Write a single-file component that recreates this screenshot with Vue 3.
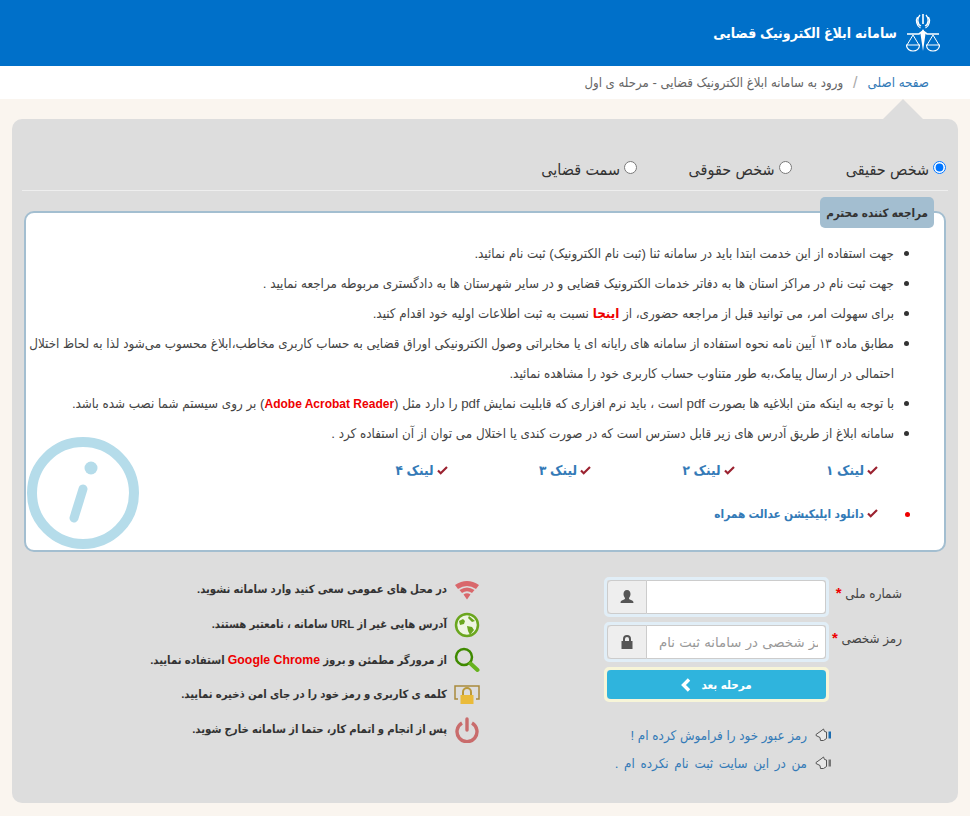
<script setup>
const bullets = [
  { text: 'جهت استفاده از این خدمت ابتدا باید در سامانه ثنا (ثبت نام الکترونیک) ثبت نام نمائید.' },
  { text: 'جهت ثبت نام در مراکز استان ها به دفاتر خدمات الکترونیک قضایی و در سایر شهرستان ها به دادگستری مربوطه مراجعه نمایید .' }
]
const links = ['لینک ۱', 'لینک ۲', 'لینک ۳', 'لینک ۴']
</script>

<template>
  <div class="page" dir="rtl">
    <header class="top">
      <svg class="emblem" viewBox="0 0 34 40" width="34" height="40" fill="none" stroke="#fff" stroke-width="1">
        <path d="M17 1v10" stroke-width="1.600" />
        <path d="M14 2c-3 3-3 9 1 11M20 2c3 3 3 9-1 11M11.500 4c-2 3-1 9 3 11M22.500 4c2 3 1 9-3 11" stroke-width="1.300" />
        <path d="M1 21h12l4-3 4 3h12" stroke-width="1.600" />
        <path d="M17 16l-2.500 5 2.500 17 2.500-17z" fill="#fff" stroke="none" />
        <path d="M7 22L1 32M7 22l6 10M27 22l-6 10M27 22l6 10" />
        <path d="M.5 32h13c0 8-13 8-13 0zM20.500 32h13c0 8-13 8-13 0z" stroke-width="1.200" />
      </svg>
      <h1>سامانه ابلاغ الکترونیک قضایی</h1>
    </header>

    <nav class="crumbs">
      <a>صفحه اصلی</a>
      <span class="sep">/</span>
      <span class="here">ورود به سامانه ابلاغ الکترونیک قضایی - مرحله ی اول</span>
    </nav>

    <main class="panel">
      <div class="notch"></div>
      <div class="kinds">
        <label class="kind"><input type="radio" name="kind" checked />شخص حقیقی</label>
        <label class="kind"><input type="radio" name="kind" />شخص حقوقی</label>
        <label class="kind"><input type="radio" name="kind" />سمت قضایی</label>
      </div>

      <section class="notice">
        <div class="badge">مراجعه کننده محترم</div>
        <ul>
          <li v-for="b in bullets" :key="b.text">{{ b.text }}</li>
          <li>برای سهولت امر، می توانید قبل از مراجعه حضوری، از <b class="red">اینجا</b> نسبت به ثبت اطلاعات اولیه خود اقدام کنید.</li>
          <li>مطابق ماده ۱۳ آیین نامه نحوه استفاده از سامانه های رایانه ای یا مخابراتی وصول الکترونیکی اوراق قضایی به حساب کاربری مخاطب،ابلاغ محسوب می‌شود لذا به لحاظ اختلال احتمالی در ارسال پیامک،به طور متناوب حساب کاربری خود را مشاهده نمائید.</li>
          <li>با توجه به اینکه متن ابلاغیه ها بصورت pdf است ، باید نرم افزاری که قابلیت نمایش pdf را دارد مثل (<b class="red latin">Adobe Acrobat Reader</b>) بر روی سیستم شما نصب شده باشد.</li>
          <li>سامانه ابلاغ از طریق آدرس های زیر قابل دسترس است که در صورت کندی یا اختلال می توان از آن استفاده کرد .</li>
        </ul>
        <div class="links">
          <a v-for="l in links" :key="l" class="link"><svg class="check" viewBox="0 0 12 10" width="11" height="9"><path d="M1 5l3 3 7-7" fill="none" stroke="#9b2230" stroke-width="2.400" /></svg>{{ l }}</a>
        </div>
        <div class="app">
          <i class="dot"></i>
          <a class="link small"><svg class="check" viewBox="0 0 12 10" width="11" height="9"><path d="M1 5l3 3 7-7" fill="none" stroke="#9b2230" stroke-width="2.400" /></svg>دانلود اپلیکیشن عدالت همراه</a>
        </div>
        <svg class="info" viewBox="0 0 114 114" width="114" height="114">
          <circle cx="57" cy="57" r="51" fill="none" stroke="#b5dcea" stroke-width="10" />
          <circle cx="65" cy="32" r="6.500" fill="#b5dcea" />
          <path d="M57 53L48 82" stroke="#b5dcea" stroke-width="9" stroke-linecap="round" />
        </svg>
      </section>

      <div class="bottom">
        <div class="form">
          <div class="row">
            <label>شماره ملی <em>*</em></label>
            <div class="group">
              <input type="text" />
              <span class="addon">
                <svg viewBox="0 0 16 16" width="16" height="16"><path d="M8 1c2.400 0 3.500 1.800 3.500 4 0 1.800-.8 3.200-1.500 4 0 1 .3 1.300 1.500 1.800 1.500.6 3 1 3 3.200H1.500c0-2.200 1.500-2.600 3-3.200C5.700 10.300 6 10 6 9c-.7-.8-1.500-2.200-1.500-4C4.500 2.800 5.600 1 8 1z" fill="#555" /></svg>
              </span>
            </div>
          </div>
          <div class="row">
            <label>رمز شخصی <em>*</em></label>
            <div class="group">
              <input class="pass" type="text" placeholder="رمز شخصی در سامانه ثبت نام" />
              <span class="addon">
                <svg viewBox="0 0 16 16" width="16" height="16"><path d="M4 7V5a4 4 0 0 1 8 0v2h1.500v8h-11V7zm2 0h4V5a2 2 0 0 0-4 0z" fill="#555" /></svg>
              </span>
            </div>
          </div>
          <div class="row">
            <span class="label-gap"></span>
            <div class="next-wrap">
              <button class="next">مرحله بعد
                <svg viewBox="0 0 10 14" width="10" height="14"><path d="M8 1.500L2.500 7 8 12.500" fill="none" stroke="#fff" stroke-width="3.400" /></svg>
              </button>
            </div>
          </div>
          <div class="help">
            <a>
              <svg viewBox="0 0 17 14" width="17" height="14"><path d="M1 6.500L6 3l2.500-2 1 2.500 2 .5v6.500L8.500 12.500H5.500L5 9.500 1 7.500z" fill="#e8e8e8" stroke="#555" stroke-linejoin="round" /><path d="M13.500 3.500h2.500v7h-2.500z" fill="#1b6cb0" /></svg>
              رمز عبور خود را فراموش کرده ام !
            </a>
            <a class="signup">
              <svg viewBox="0 0 17 14" width="17" height="14"><path d="M1 6.500L6 3l2.500-2 1 2.500 2 .5v6.500L8.500 12.500H5.500L5 9.500 1 7.500z" fill="#e8e8e8" stroke="#555" stroke-linejoin="round" /><path d="M13.500 3.500h2.500v7h-2.500z" fill="#777" /></svg>
              من در این سایت ثبت نام نکرده ام .
            </a>
          </div>
        </div>

        <ul class="tips">
          <li>
            <svg viewBox="0 0 26 24" width="26" height="24"><path d="M1 7Q13-1 25 7l-3 4Q13 5 4 11zM5.500 12Q13 7 20.500 12l-2.500 3Q13 11.500 8 15zM9.500 16.500Q13 14 16.500 16.500L13 21.500z" fill="#d9686c" /></svg>
            <span>در محل های عمومی سعی کنید وارد سامانه نشوید.</span>
          </li>
          <li>
            <svg viewBox="0 0 26 26" width="26" height="26"><circle cx="13" cy="13" r="11" fill="#eef5e2" stroke="#6aa61e" stroke-width="2.500" /><path d="M5 9l4-2 2 2-1 3-4 1zM13 14l5 1 2 3-4 5-2-4zM15 4l6 5-3 1-4-4z" fill="#6aa61e" /></svg>
            <span>آدرس هایی غیر از URL سامانه ، نامعتبر هستند.</span>
          </li>
          <li>
            <svg viewBox="0 0 26 26" width="26" height="26"><circle cx="10" cy="10" r="8" fill="none" stroke="#3f8a00" stroke-width="2.500" /><path d="M16.500 16.500l7 6.500" stroke="#66b21e" stroke-width="4" stroke-linecap="round" /></svg>
            <span>از مرورگر مطمئن و بروز <b class="red big">Google Chrome</b> استفاده نمایید.</span>
          </li>
          <li>
            <svg viewBox="0 0 26 22" width="26" height="22"><path d="M4 15H1V2h24v13h-3" fill="none" stroke="#a98a3c" stroke-width="1.500" /><path d="M9 11V8a4 4 0 0 1 8 0v3" fill="none" stroke="#b9983a" stroke-width="2" /><rect x="6.500" y="11" width="13" height="9" fill="#eabb3a" /></svg>
            <span>کلمه ی کاربری و رمز خود را در جای امن ذخیره نمایید.</span>
          </li>
          <li>
            <svg viewBox="0 0 26 26" width="26" height="26"><path d="M8 6a10 10 0 1 0 10 0" fill="none" stroke="#c96c6c" stroke-width="3.400" /><path d="M13 2v11" stroke="#c96c6c" stroke-width="3.400" stroke-linecap="round" /></svg>
            <span>پس از انجام و اتمام کار، حتما از سامانه خارج شوید.</span>
          </li>
        </ul>
      </div>
    </main>
  </div>
</template>

<style>
html, body {
  margin: 0;
  background: #faf5ef;
}
</style>

<style scoped>
.page {
  font-family: "Liberation Sans", "DejaVu Sans", sans-serif;
  font-stretch: condensed;
  font-size: 13.300px;
  color: #444;
  height: 816px;
  overflow: hidden;
}
.top {
  height: 66px;
  background: #0070c9;
  display: flex;
  align-items: center;
  padding: 0 30px 0 0;
  gap: 9px;
  color: #fff;
}
.top h1 {
  margin: 0;
  font-size: 14px;
  font-weight: bold;
}
.crumbs {
  height: 33px;
  background: #fff;
  display: flex;
  align-items: center;
  padding-right: 41px;
  color: #666;
}
.crumbs a {
  color: #337ab7;
}
.here {
  font-size: 13.100px;
}
.sep {
  margin: 0 10px;
  color: #aaa;
  font-size: 16px;
}
.panel {
  position: relative;
  margin: 20px 12px 0;
  height: 684px;
  background: #ddd;
  border-radius: 10px;
  padding: 0 10px;
  box-sizing: border-box;
}
.notch {
  position: absolute;
  top: -20px;
  right: 35px;
  width: 0;
  height: 0;
  border-left: 20px solid transparent;
  border-right: 20px solid transparent;
  border-bottom: 20px solid #ddd;
}
.kinds {
  height: 72px;
  box-sizing: border-box;
  border-bottom: 1px solid #eee;
  display: flex;
  padding: 41px 2px 0 0;
}
.kind {
  display: flex;
  align-items: flex-start;
  font-size: 16px;
  width: 154.500px;
  gap: 4px;
  color: #333;
}
.kind input {
  margin: 1px 0 0;
}
.notice {
  position: relative;
  margin: 20px 2px 0;
  height: 341px;
  box-sizing: border-box;
  border: 2px solid #a3bed0;
  border-radius: 10px;
  background: #fff;
  padding-top: 26px;
}
.badge {
  position: absolute;
  top: -16px;
  right: 10px;
  height: 31px;
  line-height: 31px;
  padding: 0 6px;
  background: #a3bed0;
  border-radius: 5px;
  font-weight: bold;
  font-size: 11.600px;
  color: #333;
}
.notice ul {
  margin: 0;
  padding: 0 50px 0 0;
  line-height: 30px;
  list-style: none;
}
.notice li {
  position: relative;
}
.notice li::before {
  content: "";
  position: absolute;
  right: -15px;
  top: 12px;
  width: 5px;
  height: 5px;
  border-radius: 50%;
  background: #333;
}
.links {
  display: flex;
  padding: 6px 66px 0 0;
  height: 30px;
  align-items: center;
}
.links .link {
  width: 143.500px;
}
.link {
  color: #337ab7;
  font-weight: bold;
  font-size: 13.500px;
}
.link.small {
  font-size: 11.800px;
}
.check {
  margin-left: 3px;
}
.app {
  display: flex;
  align-items: center;
  margin-top: 14px;
  padding-right: 34px;
  height: 30px;
}
.dot {
  width: 5px;
  height: 5px;
  border-radius: 50%;
  background: #e00;
  margin-left: 27px;
}
.info {
  position: absolute;
  left: 0;
  bottom: 0;
}
.red {
  color: #e00;
}
.latin {
  font-size: 12px;
}
.bottom {
  display: flex;
  padding-top: 20px;
}
.form {
  width: 468px;
  flex: none;
  padding-top: 5px;
}
.row {
  display: flex;
  margin-bottom: 5px;
}
.row label, .label-gap {
  width: 119px;
  flex: none;
  padding: 7px 46px 0 0;
  box-sizing: border-box;
  white-space: nowrap;
  color: #444;
}
.row em {
  color: #e00;
  font-style: normal;
  font-weight: bold;
  font-size: 15px;
}
.group {
  width: 225px;
  height: 40px;
  box-sizing: border-box;
  border: 3px solid #e1eef7;
  border-radius: 5px;
  display: flex;
}
.group input {
  flex: 1;
  min-width: 0;
  border: 1px solid #ccc;
  border-left: 0;
  border-radius: 0 4px 4px 0;
  padding: 0 10px;
  background: #fff;
}
.group input.pass {
  direction: ltr;
  text-align: left;
  padding: 0 7px 0 12px;
  font: 13.300px "DejaVu Sans", sans-serif;
}
.pass::placeholder {
  color: #999;
}
.addon {
  width: 40px;
  flex: none;
  background: #eee;
  border: 1px solid #ccc;
  border-radius: 4px 0 0 4px;
  box-sizing: border-box;
  display: flex;
  align-items: center;
  justify-content: center;
}
.next-wrap {
  width: 225px;
  height: 35px;
  box-sizing: border-box;
  border: 3px solid #f7f5d8;
  border-radius: 5px;
}
.next {
  width: 100%;
  height: 100%;
  border: 0;
  background: #2fb4dd;
  color: #fff;
  border-radius: 4px;
  font: bold 11.500px "DejaVu Sans", sans-serif;
  font-stretch: condensed;
  display: flex;
  align-items: center;
  justify-content: center;
  gap: 10px;
}
.help {
  margin: 19px 116px 0 0;
  font-size: 13.300px;
}
.help a {
  display: flex;
  align-items: center;
  height: 28px;
  color: #337ab7;
  white-space: nowrap;
  gap: 8px;
}
.help .signup {
  word-spacing: 2px;
}
.tips {
  list-style: none;
  margin: 0;
  padding: 0;
}
.tips li {
  display: flex;
  align-items: center;
  height: 35px;
  gap: 7px;
  font-weight: bold;
  font-size: 11.300px;
  color: #333;
}
.tips .big {
  font-size: 12.300px;
}
.tips svg {
  flex: none;
}
</style>
